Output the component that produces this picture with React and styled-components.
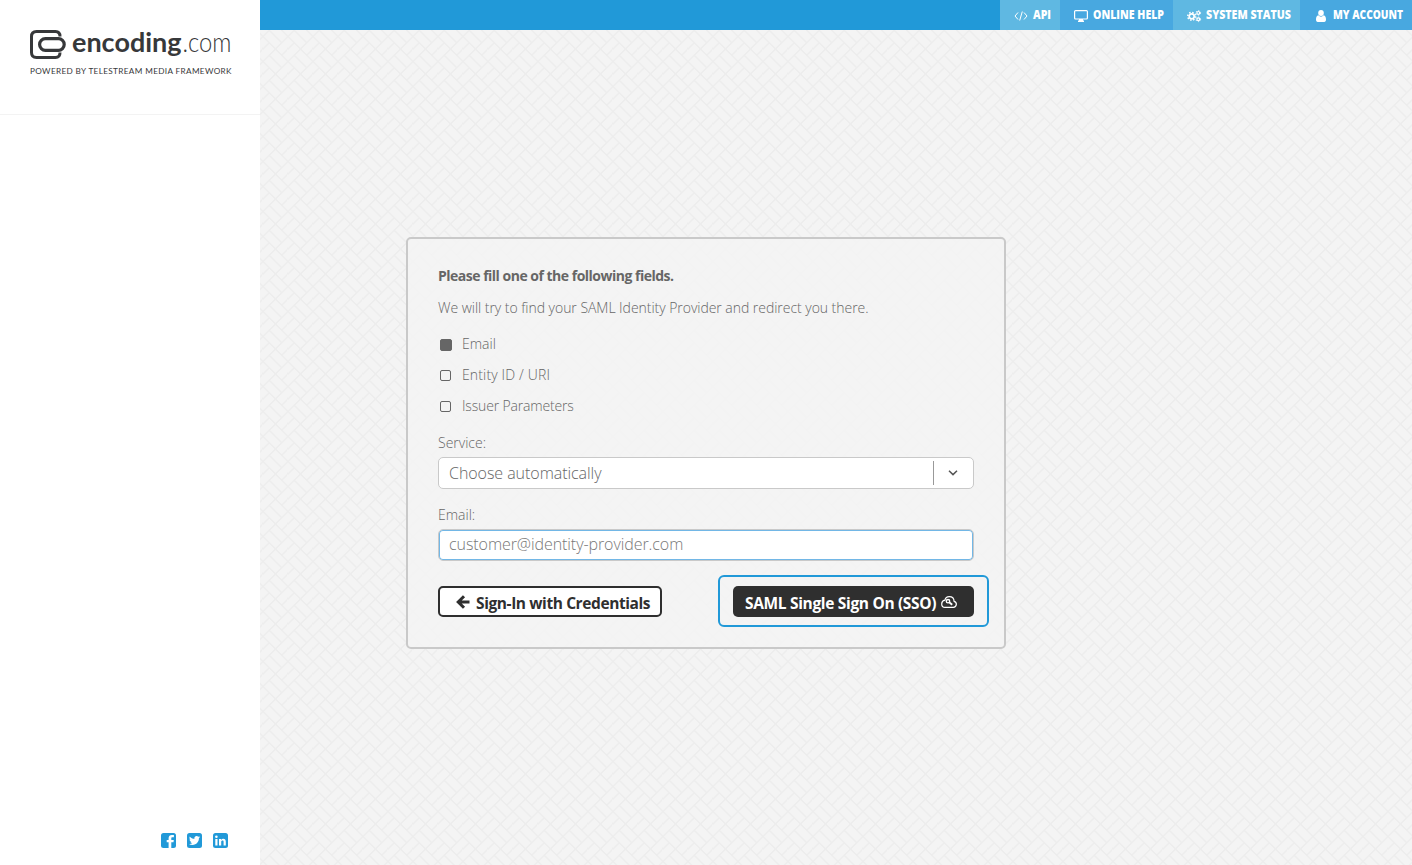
import React, { useState } from 'react';
import styled, { createGlobalStyle } from 'styled-components';

const topLinks = [
  { label: 'API', icon: 'code', width: 60, bg: '#5fb8e2', text: 18 },
  { label: 'ONLINE HELP', icon: 'desktop', width: 113, bg: '#48a8e0', text: 71 },
  { label: 'SYSTEM STATUS', icon: 'cogs', width: 127, bg: '#5fb8e2', text: 85 },
  { label: 'MY ACCOUNT', icon: 'user', width: 112, bg: '#48a8e0', text: 70 },
];

const lookups = [
  { name: 'Email', spacing: 0 },
  { name: 'Entity ID / URI', spacing: 0.14 },
  { name: 'Issuer Parameters', spacing: -0.17 },
];

// basket weave, turned by 45 degrees
const tile = encodeURIComponent(
  `<svg xmlns='http://www.w3.org/2000/svg' width='25' height='25' viewBox='0 0 25 25'><path d='M-2 14.5L14.5 -2M10.5 -2L27 14.5M-2 10.5L14.5 27M10.5 27L27 10.5M6.25 6.25L18.75 18.75M-6.25 6.25L6.25 -6.25M31.25 -6.25L18.75 6.25M-6.25 31.25L6.25 18.75M18.75 31.25L31.25 18.75' stroke='#ededed' stroke-width='1.5' fill='none'/></svg>`
);

const LinkIcon = ({ name }) => {
  if (name === 'code') {
    return (
      <svg width="14" height="12" viewBox="0 0 14 12" fill="none" stroke="#fff" strokeWidth="1">
        <path d="M4 2.500L1 6l3 3.500M10 2.500l3 3.500-3 3.500M8.300 1.500L5.700 10.500" />
      </svg>
    );
  }
  if (name === 'desktop') {
    return (
      <svg width="14" height="12" viewBox="0 0 14 12">
        <rect x="0.600" y="0.600" width="12.800" height="8.400" rx="1" fill="none" stroke="#fff" strokeWidth="1.200" />
        <path d="M5 9h4v1.500h1V12H4v-1.500h1z" fill="#fff" />
      </svg>
    );
  }
  if (name === 'cogs') {
    return (
      <svg width="14" height="12" viewBox="0 0 14 12" fill="none" stroke="#fff">
        <circle cx="4.700" cy="6.300" r="2.500" strokeWidth="1.700" />
        <circle cx="4.700" cy="6.300" r="3.900" strokeWidth="1.500" strokeDasharray="1.530 1.530" />
        <circle cx="11.300" cy="2.900" r="1.400" strokeWidth="1.200" />
        <circle cx="11.300" cy="2.900" r="2.300" strokeWidth="0.900" strokeDasharray="1.200 1.200" />
        <circle cx="11.300" cy="9.300" r="1.400" strokeWidth="1.200" />
        <circle cx="11.300" cy="9.300" r="2.300" strokeWidth="0.900" strokeDasharray="1.200 1.200" />
      </svg>
    );
  }
  return (
    <svg width="14" height="12" viewBox="0 0 14 12" fill="#fff">
      <ellipse cx="7" cy="3" rx="2.800" ry="3" />
      <path d="M4.400 5.300C2.600 5.800 2 7.400 2 9.600 2 11 2.600 12 3.800 12h6.400c1.200 0 1.800-1 1.800-2.400 0-2.200-.6-3.800-2.400-4.300C8.200 7.200 5.800 7.200 4.400 5.300z" />
    </svg>
  );
};

const App = () => {
  const [lookup, setLookup] = useState('Email');
  const [email, setEmail] = useState('');

  return (
    <>
      <GlobalStyle />
      <Page>
        <Sidebar>
          <Brand>
            <svg width="202" height="48" viewBox="0 0 202 48" fill="#37383a">
              <path
                d="M30 6.500C30 3 28.500 1.500 25.500 1.500H6.500C3 1.500 1.500 3.500 1.500 6.500v16C1.500 26 3 27.500 6.500 27.500h19C28.500 27.500 30 26 30 22.500"
                fill="none" stroke="#37383a" strokeWidth="3"
              />
              <rect x="9.600" y="8.700" width="24.600" height="11.600" rx="5.800" fill="none" stroke="#37383a" strokeWidth="3.200" />
              <LogoText x="42" y="22.300" textLength="109.500" lengthAdjust="spacingAndGlyphs" $weight={700} $size={27.5}>encoding</LogoText>
              <LogoText x="152.500" y="22.300" textLength="49" lengthAdjust="spacingAndGlyphs" $weight={300} $size={27.5}>.com</LogoText>
              <LogoText x="0" y="43.700" textLength="201.500" $weight={400} $size={8.2}>POWERED BY TELESTREAM MEDIA FRAMEWORK</LogoText>
            </svg>
          </Brand>
          <Social>
            <svg width="15" height="15" viewBox="0 0 15 15">
              <rect width="15" height="15" rx="2.500" fill="#2199d8" />
              <path d="M7.600 15V9.200H5.700V6.900h1.900V5.300c0-2.200 1.200-3.400 3.300-3.400h2v2.300h-1.400c-.9 0-1.200.3-1.200 1.100v1.600h2.500l-.3 2.300h-2.200V15z" fill="#fff" />
            </svg>
            <svg width="15" height="15" viewBox="0 0 15 15">
              <rect width="15" height="15" rx="2.500" fill="#2199d8" />
              <path
                transform="translate(2 2) scale(.46)"
                d="M23.950 4.570a10 10 0 0 1-2.820.78 4.960 4.960 0 0 0 2.160-2.720c-.95.550-2 .950-3.120 1.180a4.920 4.920 0 0 0-8.380 4.480C7.690 8.100 4.070 6.130 1.640 3.160a4.920 4.920 0 0 0 1.520 6.570 4.900 4.900 0 0 1-2.230-.61v.06a4.920 4.920 0 0 0 3.950 4.830 5 5 0 0 1-2.210.080 4.940 4.940 0 0 0 4.600 3.420A9.870 9.870 0 0 1 0 19.540a14 14 0 0 0 7.550 2.210c9.050 0 14-7.500 14-13.980v-.64a10 10 0 0 0 2.400-2.560z"
                fill="#fff"
              />
            </svg>
            <svg width="15" height="15" viewBox="0 0 15 15">
              <rect width="15" height="15" rx="2.500" fill="#2199d8" />
              <path d="M2.300 6h2.200v6.500H2.300zM6 6h2.100v.9c.5-.7 1.200-1.100 2.100-1.100 1.800 0 2.600 1.100 2.600 3v3.700h-2.200V9c0-.9-.3-1.400-1.100-1.400S8.200 8.200 8.200 9v3.500H6z" fill="#fff" />
              <circle cx="3.400" cy="3.700" r="1.300" fill="#fff" />
            </svg>
          </Social>
        </Sidebar>

        <Main>
          <TopBar>
            {topLinks.map(link => (
              <TopLink key={link.label} href="#" $width={link.width} $bg={link.bg}>
                <LinkIcon name={link.icon} />
                <svg width={link.text + 3} height="18">
                  <TopLabel x="0" y="12" textLength={link.text} lengthAdjust="spacingAndGlyphs">{link.label}</TopLabel>
                </svg>
              </TopLink>
            ))}
          </TopBar>

          <Content>
            <Card onSubmit={e => e.preventDefault()}>
              <Title>Please fill one of the following fields.</Title>
              <Hint>We will try to find your SAML Identity Provider and redirect you there.</Hint>
              <Options>
                {lookups.map(({ name, spacing }) => (
                  <Option key={name} $spacing={spacing} onClick={() => setLookup(name)}>
                    <Box $checked={lookup === name} />
                    <span>{name}</span>
                  </Option>
                ))}
              </Options>
              <Label>Service:</Label>
              <Select>
                <SelectValue>Choose automatically</SelectValue>
                <SelectArrow>
                  <svg width="10" height="6" viewBox="0 0 10 6" fill="none" stroke="#555" strokeWidth="1.500">
                    <path d="M1 .8l4 3.800 4-3.800" />
                  </svg>
                </SelectArrow>
              </Select>
              <Label>Email:</Label>
              <Input value={email} onChange={e => setEmail(e.target.value)} placeholder="customer@identity-provider.com" />
              <Actions>
                <BackButton type="button">
                  <svg width="14" height="14" viewBox="0 0 14 14" fill="none" stroke="#2f2f2f" strokeWidth="3">
                    <path d="M13.500 7H3M8 1.200L2.200 7 8 12.800" />
                  </svg>
                  <ButtonText $spacing={-0.41}>Sign-In with Credentials</ButtonText>
                </BackButton>
                <Highlight>
                  <SsoButton>
                    <ButtonText $spacing={-0.33}>SAML Single Sign On (SSO)</ButtonText>
                    <svg width="16" height="12" viewBox="0 0 16 12" fill="none" stroke="#fff" strokeWidth="1.200">
                      <path d="M4 11.300h8.300a3 3 0 0 0 .8-5.900C13 2.500 11 .7 8.300.7 6 .7 4.400 2 3.900 4.200 2 4.600.7 6 .7 7.900c0 2 1.400 3.400 3.300 3.400z" />
                      <circle cx="7" cy="5.200" r="1.700" strokeWidth="1.400" />
                      <path d="M8.200 6.300l3 2.500" strokeWidth="1.900" />
                    </svg>
                  </SsoButton>
                </Highlight>
              </Actions>
            </Card>
          </Content>
        </Main>
      </Page>
    </>
  );
};

const GlobalStyle = createGlobalStyle`
  * {
    box-sizing: border-box;
  }
  body {
    margin: 0;
    color: #666;
    font-family: 'Open Sans', 'Noto Sans', sans-serif;
    font-size: 14px;
    font-weight: 300;
  }
  button, input {
    font-family: inherit;
  }
  svg {
    display: block;
    flex: none;
    overflow: visible;
  }
`;

// Styled-components
const Page = styled.div`
  display: flex;
  height: 100vh;
  overflow: hidden;
`;

const Sidebar = styled.aside`
  display: flex;
  flex-direction: column;
  justify-content: space-between;
  width: 260px;
  flex: none;
  background: #fff;
`;

const Brand = styled.div`
  height: 115px;
  padding: 30px 28px 0 30px;
  border-bottom: 1px solid #f3f3f3;
`;

const LogoText = styled.text`
  font-family: Lato, sans-serif;
  font-size: ${p => p.$size}px;
  font-weight: ${p => p.$weight};
`;

const Social = styled.div`
  display: flex;
  justify-content: flex-end;
  gap: 11px;
  padding: 0 32px 17px 0;
`;

const Main = styled.main`
  display: flex;
  flex-direction: column;
  flex: 1;
  background: #f4f4f4 url("data:image/svg+xml,${tile}") 2.5px -0.8px;
`;

const TopBar = styled.nav`
  display: flex;
  justify-content: flex-end;
  height: 30px;
  background: #2199d8;
`;

const TopLink = styled.a`
  display: flex;
  align-items: center;
  gap: 5px;
  width: ${p => p.$width}px;
  padding: 1px 0 0 14px;
  background: ${p => p.$bg};
  text-decoration: none;
`;

const TopLabel = styled.text`
  fill: #fff;
  font-size: 12px;
  font-weight: 800;
`;

const Content = styled.div`
  padding: 207px 0 0 146px;
`;

const Card = styled.form`
  width: 600px;
  height: 412px;
  padding: 26px 30px;
  background: rgba(243, 243, 243, 0.85);
  border: 2px solid #c9c9c9;
  border-radius: 5px;
`;

const Title = styled.h1`
  margin: 0;
  font-size: 14px;
  line-height: 22px;
  font-weight: 700;
  letter-spacing: -0.5px;
`;

const Hint = styled.p`
  margin: 10px 0 13px;
  line-height: 22px;
  white-space: nowrap;
  letter-spacing: -0.04px;
`;

const Options = styled.div`
  display: flex;
  flex-direction: column;
  gap: 9px;
  margin-bottom: 16px;
`;

const Option = styled.label`
  display: flex;
  align-items: center;
  gap: 11px;
  height: 22px;
  letter-spacing: ${p => p.$spacing}px;
`;

const Box = styled.i`
  width: ${p => (p.$checked ? 12 : 11)}px;
  height: ${p => (p.$checked ? 12 : 11)}px;
  margin: ${p => (p.$checked ? '4px -1px 0 2px' : '2px 0 0 2px')};
  background: ${p => (p.$checked ? '#666' : 'transparent')};
  border: 1px solid #666;
  border-radius: 2px;
`;

const Label = styled.div`
  height: 25px;
  line-height: 22px;
`;

const Select = styled.div`
  display: flex;
  align-items: center;
  height: 32px;
  margin-bottom: 15px;
  padding-left: 10px;
  background: #fff;
  border: 1px solid #c9c9c9;
  border-radius: 5px;
  font-size: 16px;
`;

const SelectValue = styled.span`
  flex: 1;
  letter-spacing: -0.05px;
`;

const SelectArrow = styled.span`
  display: flex;
  align-items: center;
  justify-content: center;
  width: 40px;
  height: 24px;
  padding-right: 2px;
  border-left: 1px solid #999;
`;

const Input = styled.input`
  display: block;
  width: 100%;
  height: 32px;
  padding: 0 10px 2px;
  color: #666;
  background: #fff;
  border: 1px solid #c9c9c9;
  border-radius: 5px;
  box-shadow: inset 0 0 0 1px #72b7e6;
  outline: none;
  font-size: 16px;
  font-weight: 300;
  letter-spacing: -0.07px;
  &::placeholder {
    color: #777;
  }
`;

const Actions = styled.div`
  display: flex;
  align-items: flex-start;
  justify-content: space-between;
  margin: 14px -15px 0 0;
`;

const BackButton = styled.button`
  display: flex;
  align-items: center;
  gap: 6px;
  width: 224px;
  height: 31px;
  margin-top: 11px;
  padding: 0 0 0 16px;
  color: #2f2f2f;
  background: #fff;
  border: 2px solid #2f2f2f;
  border-radius: 5px;
`;

const ButtonText = styled.span`
  padding-top: 2px;
  font-size: 15.5px;
  font-weight: 700;
  letter-spacing: ${p => p.$spacing}px;
  white-space: nowrap;
`;

const Highlight = styled.div`
  width: 271px;
  height: 52px;
  padding: 9px 13px;
  border: 2px solid #2199d8;
  border-radius: 6px;
`;

const SsoButton = styled.button`
  display: flex;
  align-items: center;
  gap: 5px;
  width: 241px;
  height: 31px;
  padding: 0 0 0 12px;
  color: #fff;
  background: #2f2f2f;
  border: 0;
  border-radius: 5px;
`;

export default App;
